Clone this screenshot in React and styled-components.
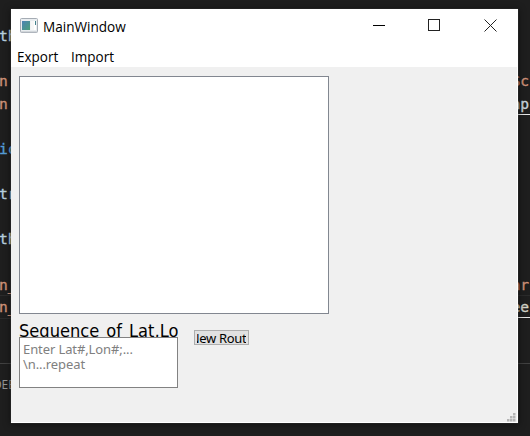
import React from 'react';
import styled, { createGlobalStyle } from 'styled-components';

const Global = createGlobalStyle`
  * { box-sizing: border-box; }
  html, body { margin: 0; padding: 0; overflow: hidden; background: #1e1e1e; }
`;

const Desktop = styled.div`
  display: grid;
  grid-template-columns: 11px 507px 12px;
  width: 530px;
  height: 436px;
  overflow: hidden;
  background: #1e1e1e;
`;

const EditorStrip = styled.div`
  display: flex;
  flex-direction: column;
  min-width: 0;
  padding-top: 25px;
  height: 436px;
  overflow: hidden;
`;

const CodeLine = styled.div`
  display: flex;
  flex: none;
  justify-content: ${(p) => (p.$end ? 'flex-end' : 'flex-start')};
  height: 22.6px;
  padding-right: ${(p) => (p.$end ? '1px' : '0')};
  border-bottom: ${(p) => (p.$ruled ? '1px solid #2b2b2b' : '0')};
  font: 14.6px/22px 'DejaVu Sans Mono', monospace;
  -webkit-text-stroke: 0.35px currentColor;
  text-indent: ${(p) => (p.$end ? '0' : '-1px')};
  color: ${(p) => p.$color || '#ce9178'};
  white-space: pre;
`;

const Underlined = styled.span`
  height: 22px;
  margin-right: -1px;
  padding-right: 1px;
  border-bottom: 1px solid #e8e8e8;
`;

const PanelEdge = styled.div`
  flex: none;
  height: 22px;
  margin-top: 44px;
  border-top: 1px solid #414141;
`;

const PanelTab = styled.div`
  margin: -11px 0 0 -7px;
  font: 12px/22px 'Open Sans', sans-serif;
  letter-spacing: -0.1px;
  color: #969696;
  white-space: nowrap;
`;

const Window = styled.main`
  position: relative;
  display: flex;
  flex-direction: column;
  height: 414px;
  margin-top: 9px;
  border: solid #fff;
  border-width: 0 1px 1px 0;
  background: #f0f0f0;
  box-shadow: 0 0 1px 0 #555, 0 1px 7px 1px rgba(0, 0, 0, 0.4);
`;

const TitleBar = styled.header`
  display: flex;
  align-items: center;
  height: 34px;
  padding-left: 9px;
  background: #fff;
`;

const Title = styled.h1`
  margin: 0 auto 0 4px;
  font: 400 15px/20px 'Open Sans', sans-serif;
  transform: scaleX(0.905);
  transform-origin: left;
  color: #000;
`;

const Controls = styled.div`
  display: flex;
  gap: 42px;
  margin: -1px 20px 0 0;
  svg { display: block; }
`;

const MenuBar = styled.nav`
  display: flex;
  height: 24px;
  padding: 2px 6px 0;
  background: #fff;
`;

const MenuItem = styled.span`
  width: 54px;
  font: 15px/22px 'Open Sans', sans-serif;
  transform: scaleX(0.9);
  transform-origin: left;
  color: #000;
`;

const Content = styled.section`
  display: flex;
  flex-direction: column;
  padding: 9px 8px 8px;
`;

const Canvas = styled.div`
  width: 310px;
  height: 238px;
  border: 1px solid #828790;
  background: #fff;
`;

const FormRow = styled.div`
  display: flex;
  gap: 16px;
  padding-top: 6px;
`;

const Field = styled.div`
  width: 159px;
`;

const Label = styled.div`
  height: 17px;
  overflow: hidden;
  font: 18px/22px 'DejaVu Sans', sans-serif;
  word-spacing: 2px;
  white-space: nowrap;
  color: #000;
`;

const LabelText = styled.span`
  display: block;
  width: max-content;
  transform: scaleX(0.905);
  transform-origin: left;
`;

const TextBox = styled.div`
  height: 51px;
  padding: 4px 3px;
  border: 1px solid #828282;
  background: #fff;
  font: 13px/15px 'Noto Sans', sans-serif;
  letter-spacing: -0.1px;
  color: #808080;
  white-space: pre;
`;

const PushButton = styled.button`
  display: flex;
  justify-content: center;
  width: 55px;
  height: 15px;
  margin-top: 10px;
  padding: 0 2px;
  border: 1px solid #adadad;
  background: #e1e1e1;
  color: #000;
`;

const ButtonCaption = styled.span`
  display: flex;
  justify-content: center;
  width: 50px;
  height: 13px;
  overflow: hidden;
  font: 13px/14px 'Noto Sans', sans-serif;
  letter-spacing: -0.35px;
  white-space: nowrap;
`;

const Grip = styled.svg`
  position: absolute;
  right: 1px;
  bottom: 0;
`;

const leftLines = [
  ['th', '#b8cfdf'], [''], ['n'], ['n'], [''], ['ic', '#569cd6'], [''],
  ['tr', '#b8cfdf'], [''], ['th', '#b8cfdf'], [''], ['n_', '', true], ['n_', '', true],
];

const rightLines = [
  [''], [''], ['Sc'], ['ap', '#c8d4dc', false, true], [''], [''], [''], [''], [''], [''],
  [''], ['ar', '', true], ['ee', '#d4d4c8', false, true],
];

function Strip({ lines, end, tab }) {
  return (
    <EditorStrip>
      {lines.map(([text, color, ruled, underlined], i) => (
        <CodeLine key={i} $color={color} $end={end} $ruled={ruled}>
          {underlined ? <Underlined>{text}</Underlined> : text}
        </CodeLine>
      ))}
      <PanelEdge />
      {tab && <PanelTab>{tab}</PanelTab>}
    </EditorStrip>
  );
}

function AppIcon() {
  return (
    <svg width="19" height="16" viewBox="0 0 19 16">
      <defs>
        <linearGradient id="pane" x1="0" y1="0" x2="1" y2="1">
          <stop offset="0" stopColor="#4b83b5" />
          <stop offset="1" stopColor="#4a9f79" />
        </linearGradient>
      </defs>
      <rect x="0.5" y="0.5" width="17" height="14" rx="1" fill="#e9edf0" stroke="#a5acb4" />
      <path d="M1 14h16" stroke="#b9bec5" />
      <rect x="2" y="3" width="8" height="9" fill="url(#pane)" />
      <rect x="10.5" y="3" width="3.5" height="9" fill="#f7f7f7" />
      <rect x="14" y="3" width="2" height="9" fill="#fff" />
      <path d="M15.5 3v4" stroke="#46838d" />
    </svg>
  );
}

export default function App() {
  return (
    <>
      <Global />
      <Desktop>
        <Strip lines={leftLines} tab="DEB" />
        <Window>
          <TitleBar>
            <AppIcon />
            <Title>MainWindow</Title>
            <Controls>
              <svg width="13" height="13"><path d="M0 6.5h12" stroke="#000" /></svg>
              <svg width="14" height="13"><rect x="0.5" y="0.5" width="11" height="11" fill="none" stroke="#222" /></svg>
              <svg width="13" height="13"><path d="M0.5 0.5l12 12M12.5 0.5l-12 12" stroke="#222" /></svg>
            </Controls>
          </TitleBar>
          <MenuBar>
            <MenuItem>Export</MenuItem>
            <MenuItem>Import</MenuItem>
          </MenuBar>
          <Content>
            <Canvas />
            <FormRow>
              <Field>
                <Label><LabelText>Sequence of Lat,Lon</LabelText></Label>
                <TextBox>{'Enter Lat#,Lon#;...\n\\n...repeat'}</TextBox>
              </Field>
              <PushButton><ButtonCaption>New Route</ButtonCaption></PushButton>
            </FormRow>
          </Content>
          <Grip width="9" height="9" fill="#b5b5b5">
            <path d="M6 0h2.5v2.5h-2.5zM3 3h2.5v2.5h-2.5zM6 3h2.5v2.5h-2.5zM0 6h2.5v2.5h-2.5zM3 6h2.5v2.5h-2.5zM6 6h2.5v2.5h-2.5z" />
          </Grip>
        </Window>
        <Strip lines={rightLines} end />
      </Desktop>
    </>
  );
}
